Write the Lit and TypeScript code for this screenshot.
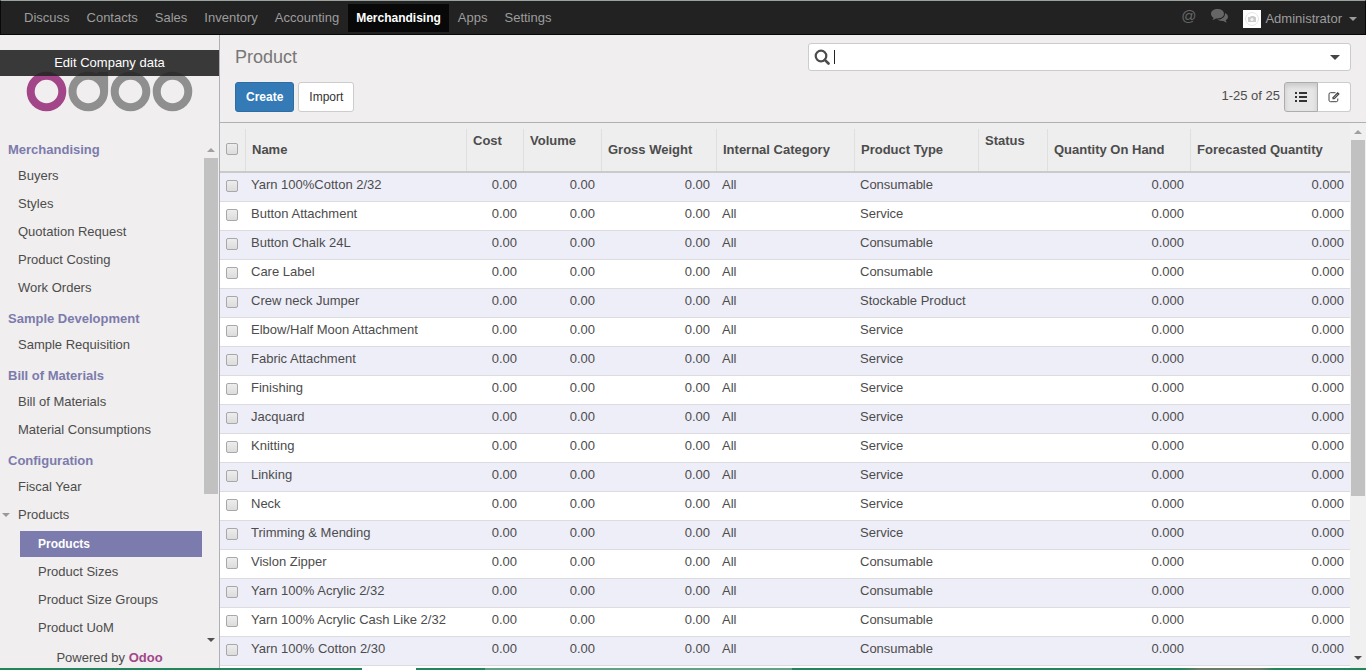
import { LitElement, html, css } from "lit";
import { customElement, property, state } from "lit/decorators.js";
import { classMap } from "lit/directives/class-map.js";

interface Product {
  name: string;
  type: string;
}

interface MenuItem {
  label: string;
  children?: string[];
}

interface MenuSection {
  title: string;
  items: MenuItem[];
}

const APPS = ["Discuss", "Contacts", "Sales", "Inventory", "Accounting", "Merchandising", "Apps", "Settings"];

const MENU: MenuSection[] = [
  {
    title: "Merchandising",
    items: ["Buyers", "Styles", "Quotation Request", "Product Costing", "Work Orders"].map((label) => ({ label })),
  },
  { title: "Sample Development", items: [{ label: "Sample Requisition" }] },
  { title: "Bill of Materials", items: [{ label: "Bill of Materials" }, { label: "Material Consumptions" }] },
  {
    title: "Configuration",
    items: [
      { label: "Fiscal Year" },
      { label: "Products", children: ["Products", "Product Sizes", "Product Size Groups", "Product UoM"] },
    ],
  },
];

const PRODUCTS: Product[] = [
  { name: "Yarn 100%Cotton 2/32", type: "Consumable" },
  { name: "Button Attachment", type: "Service" },
  { name: "Button Chalk 24L", type: "Consumable" },
  { name: "Care Label", type: "Consumable" },
  { name: "Crew neck Jumper", type: "Stockable Product" },
  { name: "Elbow/Half Moon Attachment", type: "Service" },
  { name: "Fabric Attachment", type: "Service" },
  { name: "Finishing", type: "Service" },
  { name: "Jacquard", type: "Service" },
  { name: "Knitting", type: "Service" },
  { name: "Linking", type: "Service" },
  { name: "Neck", type: "Service" },
  { name: "Trimming & Mending", type: "Service" },
  { name: "Vislon Zipper", type: "Consumable" },
  { name: "Yarn 100% Acrylic 2/32", type: "Consumable" },
  { name: "Yarn 100% Acrylic Cash Like 2/32", type: "Consumable" },
  { name: "Yarn 100% Cotton 2/30", type: "Consumable" },
];

const COLUMNS = [
  { key: "name", label: "Name", sortable: true },
  { key: "cost", label: "Cost", sortable: false },
  { key: "volume", label: "Volume", sortable: false },
  { key: "weight", label: "Gross Weight", sortable: true },
  { key: "category", label: "Internal Category", sortable: true },
  { key: "type", label: "Product Type", sortable: true },
  { key: "status", label: "Status", sortable: false },
  { key: "onhand", label: "Quantity On Hand", sortable: true },
  { key: "forecast", label: "Forecasted Quantity", sortable: true },
];

const reset = css`
  :host,
  * {
    box-sizing: border-box;
  }
  a {
    color: inherit;
    text-decoration: none;
  }
  ul {
    list-style: none;
    margin: 0;
    padding: 0;
  }
  button,
  input {
    font: inherit;
    color: inherit;
    margin: 0;
  }
  svg {
    display: block;
  }
`;

/* Scroll track with its end arrows and a thumb. */
@customElement("scroll-rail")
export class ScrollRail extends LitElement {
  @property({ type: Number }) ratio = 70;

  static styles = css`
    :host {
      display: flex;
      flex-direction: column;
      align-items: center;
      width: 16px;
      padding: 0 1px;
      box-sizing: border-box;
    }
    .arrow {
      flex: none;
      width: 0;
      border: 4px solid transparent;
      border-top-width: 0;
      border-bottom-color: #a0a0a0;
      margin: 7px 0 6px;
    }
    .down {
      border-top: 4px solid #505050;
      border-bottom-width: 0;
    }
    .track {
      flex: 1;
      display: grid;
      align-self: stretch;
    }
    .thumb {
      background: #c1c1c1;
    }
  `;

  render() {
    return html`
      <span class="arrow"></span>
      <div class="track"><div class="thumb" style="height:${this.ratio}%"></div></div>
      <span class="arrow down"></span>
    `;
  }
}

@customElement("top-bar")
export class TopBar extends LitElement {
  @property() current = "Merchandising";

  static styles = [
    reset,
    css`
      :host {
        display: flex;
        justify-content: space-between;
        align-items: center;
        height: 35px;
        flex: none;
        background: #222;
        border: 1px solid #080808;
        border-top-color: #9aa29e;
        color: #9d9d9d;
      }
      .apps {
        display: flex;
        gap: 1px;
        padding-left: 15px;
      }
      .app {
        display: block;
        padding: 0 8px;
        line-height: 28px;
      }
      .active {
        background: #080808;
        color: #fff;
        font-size: 12px;
        font-weight: bold;
      }
      .tools {
        display: flex;
        align-items: center;
        gap: 15px;
        padding-right: 8px;
      }
      .icon {
        border: 0;
        padding: 0 0 3px;
        background: none;
        color: #666;
        font-size: 15px;
        line-height: 18px;
      }
      .user {
        display: flex;
        align-items: center;
        gap: 4px;
        padding: 2px 0 0;
        border: 0;
        background: none;
      }
      .caret {
        border: 4px solid transparent;
        border-top-color: currentColor;
        border-bottom: 0;
        margin-left: 3px;
      }
    `,
  ];

  render() {
    return html`
      <nav>
        <ul class="apps">
          ${APPS.map(
            (a) => html`<li><a href="#" class=${classMap({ app: true, active: a === this.current })}>${a}</a></li>`
          )}
        </ul>
      </nav>
      <div class="tools">
        <button class="icon" aria-label="Mentions">@</button>
        <button class="icon" aria-label="Conversations">
          <svg width="17" height="14" viewBox="0 0 17 14" fill="currentColor">
            <path d="M6.5 0C10 0 13 2 13 4.8S10 9.5 6.5 9.5c-.6 0-1.100 0-1.600-.1C3.900 10.200 2.600 10.700 1.300 10.900c.7-.7 1.100-1.400 1.200-2.200C1 7.800 0 6.400 0 4.800 0 2 3 0 6.500 0z" />
            <path d="M14 4c1.800.8 3 2.200 3 3.800 0 1.400-.9 2.600-2.300 3.400.1.800.6 1.500 1.300 2.300-1.400-.2-2.700-.8-3.600-1.600-2.300.4-4.600-.1-6.200-1.300C10.600 10.800 14.300 8.300 14 4z" />
          </svg>
        </button>
        <button class="user">
          <svg width="18" height="18" viewBox="0 0 18 18" fill="none">
            <path fill="#fff" d="M0 0h18v18H0z" />
            <circle cx="9" cy="9" r="6.500" stroke="#e6e6e6" />
            <path fill="#ccc" d="M5 7h2l1-1h3l1 1h1v5H5z" />
            <circle cx="9" cy="9.500" r="1.500" fill="#f4f4f4" />
          </svg>
          <span>Administrator</span>
          <span class="caret"></span>
        </button>
      </div>
    `;
  }
}

@customElement("side-menu")
export class SideMenu extends LitElement {
  @state() private active = "Products";

  static styles = [
    reset,
    css`
      :host {
        display: flex;
        flex-direction: column;
        width: 220px;
        flex: none;
        background: #f0eeee;
        border-right: 1px solid #afafb6;
        min-height: 0;
      }
      .brand {
        position: relative;
        padding: 35px 0 21px 26px;
        flex: none;
      }
      .edit {
        position: absolute;
        top: 15px;
        left: 0;
        right: 0;
        line-height: 26px;
        text-align: center;
        color: #fff;
        background: rgba(37, 37, 37, 0.9);
      }
      .middle {
        flex: 1;
        display: flex;
        min-height: 0;
      }
      .menu {
        flex: 1;
        overflow: hidden;
      }
      .rail {
        margin-top: 8px;
      }
      .title {
        margin: 0;
        padding: 7px 8px 2px;
        font-size: 13px;
        line-height: 20px;
        font-weight: bold;
        color: #7c7bad;
      }
      .items {
        display: grid;
      }
      .link {
        display: block;
        margin: 1px 1px 1px 0;
        padding: 3px 18px;
        line-height: 20px;
        color: #4c4c4c;
      }
      .parent {
        display: flex;
        align-items: center;
        gap: 8px;
        padding-left: 2px;
      }
      .parent::before {
        content: "";
        border: 4px solid transparent;
        border-top-color: #999;
        border-bottom: 0;
      }
      .sub {
        margin-left: 20px;
        padding-top: 1px;
      }
      .active {
        background: #7c7bad;
        color: #fff;
        font-size: 12px;
        font-weight: bold;
      }
      .footer {
        flex: none;
        text-align: center;
        line-height: 20px;
        color: #4c4c4c;
      }
      .vendor {
        color: #a24689;
        font-weight: bold;
      }
    `,
  ];

  private item(i: MenuItem) {
    return html`<li>
      <a href="#" class=${classMap({ link: true, parent: !!i.children })}>${i.label}</a>
      ${i.children
        ? html`<ul class="items sub">
            ${i.children.map(
              (c) => html`<li>
                <a href="#" class=${classMap({ link: true, active: c === this.active })} @click=${() => (this.active = c)}
                  >${c}</a
                >
              </li>`
            )}
          </ul>`
        : ""}
    </li>`;
  }

  render() {
    return html`
      <div class="brand">
        <svg width="168" height="42" viewBox="0 0 168 42" fill="none" stroke-width="8" role="img" aria-label="odoo">
          <circle cx="20.500" cy="21.500" r="15.800" stroke="#a24689" />
          <g stroke="#8f8f8f">
            <circle cx="62.300" cy="21.500" r="15.800" />
            <circle cx="104.500" cy="21.500" r="15.800" />
            <circle cx="146.500" cy="21.500" r="15.800" />
          </g>
          <path fill="#8f8f8f" d="M72 2h10.100v19.500h-5C77 14 74 10 68 7z" />
        </svg>
        <a class="edit" href="#">Edit Company data</a>
      </div>
      <div class="middle">
        <nav class="menu">
          ${MENU.map(
            (s) => html`<h4 class="title">${s.title}</h4>
              <ul class="items">
                ${s.items.map((i) => this.item(i))}
              </ul>`
          )}
        </nav>
        <scroll-rail class="rail" ratio="71"></scroll-rail>
      </div>
      <div class="footer">Powered by <a class="vendor" href="#">Odoo</a></div>
    `;
  }
}

@customElement("control-panel")
export class ControlPanel extends LitElement {
  static styles = [
    reset,
    css`
      :host {
        display: grid;
        grid-template-columns: calc(50% + 15px) 1fr;
        row-gap: 11px;
        flex: none;
        padding: 8px 15px 10px;
        background: #f0eeee;
        border-bottom: 1px solid #afafb6;
      }
      .title {
        margin: 0;
        font-size: 18px;
        font-weight: normal;
        line-height: 28px;
        color: #777;
      }
      .search {
        display: flex;
        align-items: center;
        height: 28px;
        padding: 0 10px 0 5px;
        background: #fff;
        border: 1px solid #ccc;
        border-radius: 3px;
      }
      .cursor {
        width: 1px;
        height: 14px;
        margin-left: 4px;
        background: #222;
      }
      .query {
        flex: 1;
        min-width: 0;
        border: 0;
        outline: 0;
        padding: 0 2px;
        background: none;
      }
      .toggle {
        border: 0;
        padding: 0;
        background: none;
      }
      .caret {
        display: block;
        border: 5px solid transparent;
        border-top-color: #444;
        border-bottom: 0;
      }
      .buttons {
        display: flex;
        gap: 4px;
      }
      .btn {
        height: 30px;
        padding: 0 10px;
        font-size: 12px;
        line-height: 18px;
        color: #333;
        background: #fff;
        border: 1px solid #ccc;
        border-radius: 3px;
      }
      .primary {
        color: #fff;
        background: #337ab7;
        border-color: #2e6da4;
        font-weight: bold;
      }
      .pager {
        display: flex;
        justify-content: flex-end;
        gap: 4px;
        line-height: 28px;
        color: #4c4c4c;
      }
      .views {
        display: flex;
      }
      .list {
        border-radius: 3px 0 0 3px;
        background: #e6e6e6;
        border-color: #adadad;
        box-shadow: inset 0 3px 5px rgba(0, 0, 0, 0.125);
      }
      .form {
        border-radius: 0 3px 3px 0;
        border-left: 0;
      }
    `,
  ];

  render() {
    return html`
      <h1 class="title">Product</h1>
      <div class="search" role="search">
        <svg width="16" height="16" viewBox="0 0 16 16" fill="none" stroke="#4c4c4c">
          <circle cx="7" cy="7" r="5.300" stroke-width="2.200" />
          <path d="M10.800 10.800l3.700 3.700" stroke-width="2.600" stroke-linecap="round" />
        </svg>
        <span class="cursor"></span>
        <input class="query" type="text" aria-label="Search" />
        <button class="toggle" aria-label="Advanced search"><span class="caret"></span></button>
      </div>
      <div class="buttons">
        <button class="btn primary">Create</button>
        <button class="btn">Import</button>
      </div>
      <div class="pager">
        <span>1-25 of 25</span>
        <div class="views">
          <button class="btn list" aria-label="List view">
            <svg width="12" height="10" viewBox="0 0 12 10" fill="#333">
              <path d="M0 0h2v2H0zM4 0h8v2H4zM0 4h2v2H0zM4 4h8v2H4zM0 8h2v2H0zM4 8h8v2H4z" />
            </svg>
          </button>
          <button class="btn form" aria-label="Form view">
            <svg width="12" height="12" viewBox="0 0 12 12" fill="none" stroke="#444">
              <path d="M7.500 1.700H2.500a1.500 1.500 0 0 0-1.500 1.500v6a1.500 1.500 0 0 0 1.500 1.500h5.800a1.500 1.500 0 0 0 1.500-1.500V7.500" />
              <path fill="#444" stroke="none" d="M4.500 6.300L9.700 1l2 2-5.200 5.300h-2z" />
              <path stroke="#fff" stroke-width=".6" d="M5.800 7L9.500 3.200" />
            </svg>
          </button>
        </div>
      </div>
    `;
  }
}

@customElement("product-list")
export class ProductList extends LitElement {
  static styles = [
    reset,
    css`
      :host {
        display: flex;
        flex: 1;
        min-height: 0;
        background: #f0f0f0;
      }
      .viewport {
        flex: 1;
        overflow: hidden;
        background: #fff;
      }
      .rail {
        margin-bottom: 2px;
      }
      .grid {
        width: 100%;
        table-layout: fixed;
        border-collapse: separate;
        border-spacing: 0;
        color: #4c4c4c;
      }
      .c-check {
        width: 25px;
      }
      .c-cost {
        width: 57px;
      }
      .c-volume {
        width: 78px;
      }
      .c-weight {
        width: 115px;
      }
      .c-category {
        width: 138px;
      }
      .c-type {
        width: 124px;
      }
      .c-status {
        width: 69px;
      }
      .c-onhand {
        width: 143px;
      }
      .c-forecast {
        width: 160px;
      }
      .head {
        padding: 6px 0 0;
        background: #eee;
        border-bottom: 2px solid #cacaca;
        text-align: left;
        vertical-align: top;
      }
      .label {
        height: 42px;
        padding: 2px 0 0 6px;
        line-height: 20px;
        border-left: 1px solid #dfdfdf;
        white-space: nowrap;
      }
      .sortable {
        padding-top: 11px;
      }
      .pick {
        display: flex;
        height: 42px;
        padding: 14px 0 0 6px;
      }
      .cell {
        height: 29px;
        padding: 2px 6px 6px;
        line-height: 20px;
        border-bottom: 1px solid #dcdce0;
        white-space: nowrap;
      }
      .row:nth-child(odd) {
        background: #eeeef8;
      }
      .num {
        text-align: right;
      }
      .mark {
        vertical-align: bottom;
        padding: 0 0 9px 6px;
      }
      .tick {
        display: block;
        appearance: none;
        width: 12px;
        height: 12px;
        border: 1px solid #a8a8a8;
        border-radius: 2px;
        background: linear-gradient(#ededed, #dcdcdc);
      }
      .tick:checked {
        background: #7c7bad;
      }
    `,
  ];

  render() {
    return html`
      <div class="viewport">
        <table class="grid">
          <colgroup>
            <col class="c-check" />
            ${COLUMNS.map((c) => html`<col class="c-${c.key}" />`)}
          </colgroup>
          <thead>
            <tr>
              <th class="head"><div class="pick"><input class="tick" type="checkbox" aria-label="Select all" /></div></th>
              ${COLUMNS.map(
                (c) => html`<th class="head" scope="col">
                  <div class=${classMap({ label: true, sortable: c.sortable })}>${c.label}</div>
                </th>`
              )}
            </tr>
          </thead>
          <tbody>
            ${PRODUCTS.map(
              (p) => html`<tr class="row">
                <td class="cell mark"><input class="tick" type="checkbox" aria-label="Select ${p.name}" /></td>
                <td class="cell">${p.name}</td>
                <td class="cell num">0.00</td>
                <td class="cell num">0.00</td>
                <td class="cell num">0.00</td>
                <td class="cell">All</td>
                <td class="cell">${p.type}</td>
                <td class="cell"></td>
                <td class="cell num">0.000</td>
                <td class="cell num">0.000</td>
              </tr>`
            )}
          </tbody>
        </table>
      </div>
      <scroll-rail class="rail" ratio="70"></scroll-rail>
    `;
  }
}

@customElement("app-root")
export class AppRoot extends LitElement {
  static styles = css`
    :host {
      display: flex;
      flex-direction: column;
      height: 100vh;
      font: 13px/20px "Liberation Sans", Arial, sans-serif;
      color: #4c4c4c;
      background: #f0eeee;
    }
    .body {
      flex: 1;
      display: flex;
      min-height: 0;
    }
    .main {
      flex: 1;
      display: flex;
      flex-direction: column;
      min-width: 0;
    }
    .edge {
      flex: none;
      height: 2px;
      background: linear-gradient(
        90deg,
        #22855c 362px,
        #fff 362px 416px,
        #22855c 416px 485px,
        #62a386 485px 792px,
        #22855c 792px 1180px,
        #6b7c68 1200px 1260px,
        #22855c 1275px
      );
    }
  `;

  render() {
    return html`
      <top-bar></top-bar>
      <div class="body">
        <side-menu></side-menu>
        <main class="main">
          <control-panel></control-panel>
          <product-list></product-list>
        </main>
      </div>
      <div class="edge"></div>
    `;
  }
}
